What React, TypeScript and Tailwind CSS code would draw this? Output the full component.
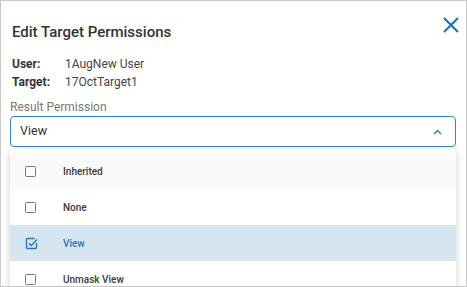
import React from 'react'

const options = [
    { label: 'Inherited', checked: false, hover: true },
    { label: 'None', checked: false },
    { label: 'View', checked: true },
    { label: 'Unmask View', checked: false },
]

function CheckBox({ checked }: { checked: boolean }) {
    if (checked) {
        return (
            <svg width="13" height="13" viewBox="0 0 13 13" className="shrink-0 -mr-[2px]">
                <path d="M9.5 1.5H2.5a1 1 0 0 0-1 1v8a1 1 0 0 0 1 1h8a1 1 0 0 0 1-1V6" fill="none" stroke="#2a78b8" strokeWidth="1.4" />
                <path d="M4 6.2l2.2 2.2L12 2.6" fill="none" stroke="#2a78b8" strokeWidth="1.4" />
            </svg>
        )
    }
    return <span className="block w-[11px] h-[11px] shrink-0 rounded-[1.5px] border-[1.3px] border-[#777]" />
}

export default function App() {
    return (
        <div className="w-[467px] h-[287px] overflow-hidden border border-[#c8c8c8] bg-white font-['Roboto',sans-serif] text-[#333]">
            <div className="flex items-start justify-between pl-[11px] pr-[5px] pt-[21px]">
                <h1 className="text-[15px] leading-[20px] font-medium text-[#333]">Edit Target Permissions</h1>
                <button className="-mt-[7px] p-[1px] text-[#1a6fb5]">
                    <svg width="18" height="18" viewBox="0 0 18 18">
                        <path d="M2 2l14 14M16 2L2 16" stroke="currentColor" strokeWidth="2" fill="none" />
                    </svg>
                </button>
            </div>

            <div className="mt-[13px] pl-[11px] text-[12px] leading-[18px]">
                <div className="flex">
                    <span className="w-[53px] font-bold">User:</span>
                    <span className="text-[#444]">1AugNew User</span>
                </div>
                <div className="flex">
                    <span className="w-[53px] font-bold">Target:</span>
                    <span className="text-[#444]">17OctTarget1</span>
                </div>
            </div>

            <div className="mt-[8px] pl-[9px] pr-[10px]">
                <div className="text-[12px] leading-[16px] text-[#777]">Result Permission</div>
                <div className="relative mt-[1px]">
                    <div className="flex h-[31px] items-center justify-between rounded-[4px] border border-[#2f86c8] pl-[9px] pr-[13px]">
                        <span className="text-[12.5px] text-[#333]">View</span>
                        <svg width="9" height="6" viewBox="0 0 9 6">
                            <path d="M1 5l3.5-3.5L8 5" stroke="#2f7fc0" strokeWidth="1.5" fill="none" />
                        </svg>
                    </div>
                    <ul className="absolute left-0 right-0 top-[33px] bg-white pt-[4px] shadow-[0_2px_8px_rgba(0,0,0,0.18)]">
                        {options.map((o) => (
                            <li
                                key={o.label}
                                className={
                                    'flex h-[36px] items-center pl-[15px] text-[10px] font-medium ' +
                                    (o.checked ? 'bg-[#d6e6f1] text-[#2a78b8]' : o.hover ? 'bg-[#fafafa] text-[#3a3a3a]' : 'text-[#3a3a3a]')
                                }
                            >
                                <CheckBox checked={o.checked} />
                                <span className="ml-[27px]">{o.label}</span>
                            </li>
                        ))}
                    </ul>
                </div>
            </div>
        </div>
    )
}
